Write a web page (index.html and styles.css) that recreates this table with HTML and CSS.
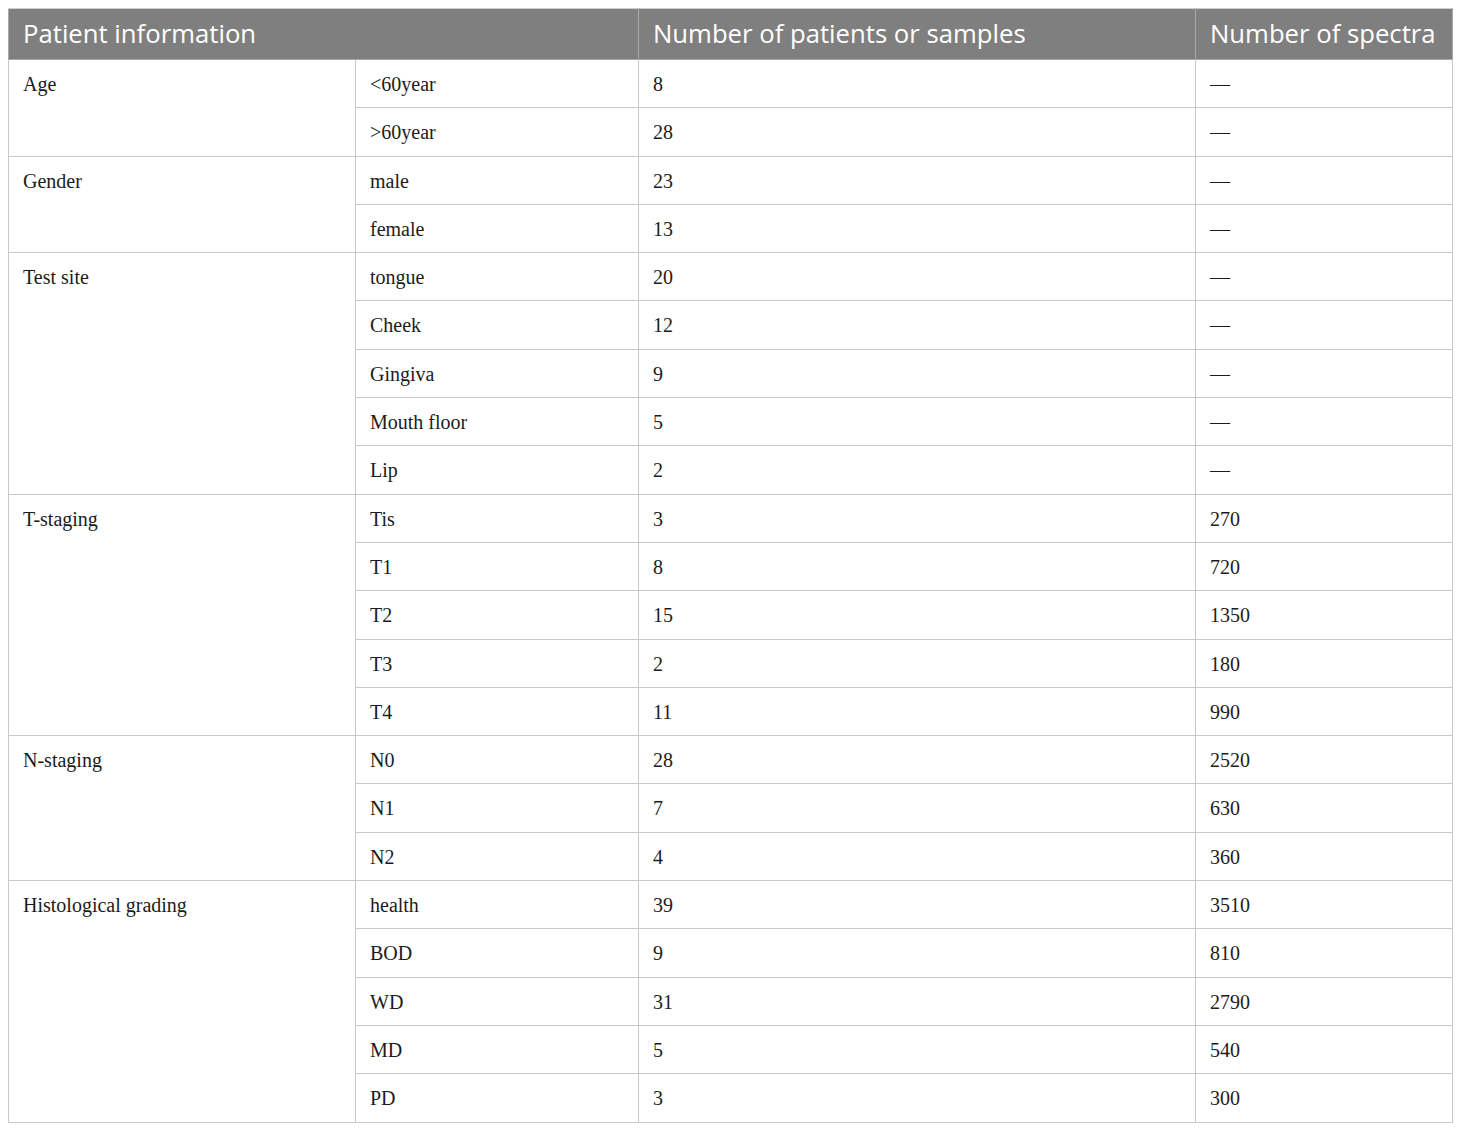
FILE: index.html
```html
<!DOCTYPE html>
<html lang="en">
<head>
<meta charset="utf-8">
<title>Patient information</title>
<link rel="stylesheet" href="styles.css">
</head>
<body>
<table class="data">
  <colgroup>
    <col class="c1"><col class="c2"><col class="c3"><col class="c4">
  </colgroup>
  <thead>
    <tr>
      <th colspan="2">Patient information</th>
      <th>Number of patients or samples</th>
      <th>Number of spectra</th>
    </tr>
  </thead>
  <tbody>
    <tr><td rowspan="2">Age</td><td>&lt;60year</td><td>8</td><td>—</td></tr>
    <tr><td>&gt;60year</td><td>28</td><td>—</td></tr>
    <tr><td rowspan="2">Gender</td><td>male</td><td>23</td><td>—</td></tr>
    <tr><td>female</td><td>13</td><td>—</td></tr>
    <tr><td rowspan="5">Test site</td><td>tongue</td><td>20</td><td>—</td></tr>
    <tr><td>Cheek</td><td>12</td><td>—</td></tr>
    <tr><td>Gingiva</td><td>9</td><td>—</td></tr>
    <tr><td>Mouth floor</td><td>5</td><td>—</td></tr>
    <tr><td>Lip</td><td>2</td><td>—</td></tr>
    <tr><td rowspan="5">T-staging</td><td>Tis</td><td>3</td><td>270</td></tr>
    <tr><td>T1</td><td>8</td><td>720</td></tr>
    <tr><td>T2</td><td>15</td><td>1350</td></tr>
    <tr><td>T3</td><td>2</td><td>180</td></tr>
    <tr><td>T4</td><td>11</td><td>990</td></tr>
    <tr><td rowspan="3">N-staging</td><td>N0</td><td>28</td><td>2520</td></tr>
    <tr><td>N1</td><td>7</td><td>630</td></tr>
    <tr><td>N2</td><td>4</td><td>360</td></tr>
    <tr><td rowspan="5">Histological grading</td><td>health</td><td>39</td><td>3510</td></tr>
    <tr><td>BOD</td><td>9</td><td>810</td></tr>
    <tr><td>WD</td><td>31</td><td>2790</td></tr>
    <tr><td>MD</td><td>5</td><td>540</td></tr>
    <tr><td>PD</td><td>3</td><td>300</td></tr>
  </tbody>
</table>
</body>
</html>
```

FILE: styles.css
```css
html, body {
  margin: 0;
  padding: 0;
  background: #ffffff;
}
body {
  padding: 8px;
}
.data {
  border-collapse: collapse;
  width: 1444px;
  table-layout: fixed;
  font-family: "Liberation Serif", "Times New Roman", serif;
  font-size: 20px;
  color: #1c1c1c;
}
.c1 { width: 347px; }
.c2 { width: 283px; }
.c3 { width: 557px; }
.c4 { width: 257px; }
.data th {
  background: #7f7f7f;
  color: #ffffff;
  font-family: "Open Sans", "Noto Sans", sans-serif;
  font-weight: 400;
  font-size: 25.7px;
  text-align: left;
  height: 51px;
  padding: 0 14px;
  border: 1px solid #a9a9a9;
  border-top-color: #cfcfcf;
  vertical-align: middle;
  box-sizing: border-box;
  line-height: 30px;
}
.data td {
  border: 1px solid #c8c8c8;
  padding: 12px 14px 0;
  height: 48.3px;
  line-height: 24px;
  vertical-align: top;
  box-sizing: border-box;
}
```
